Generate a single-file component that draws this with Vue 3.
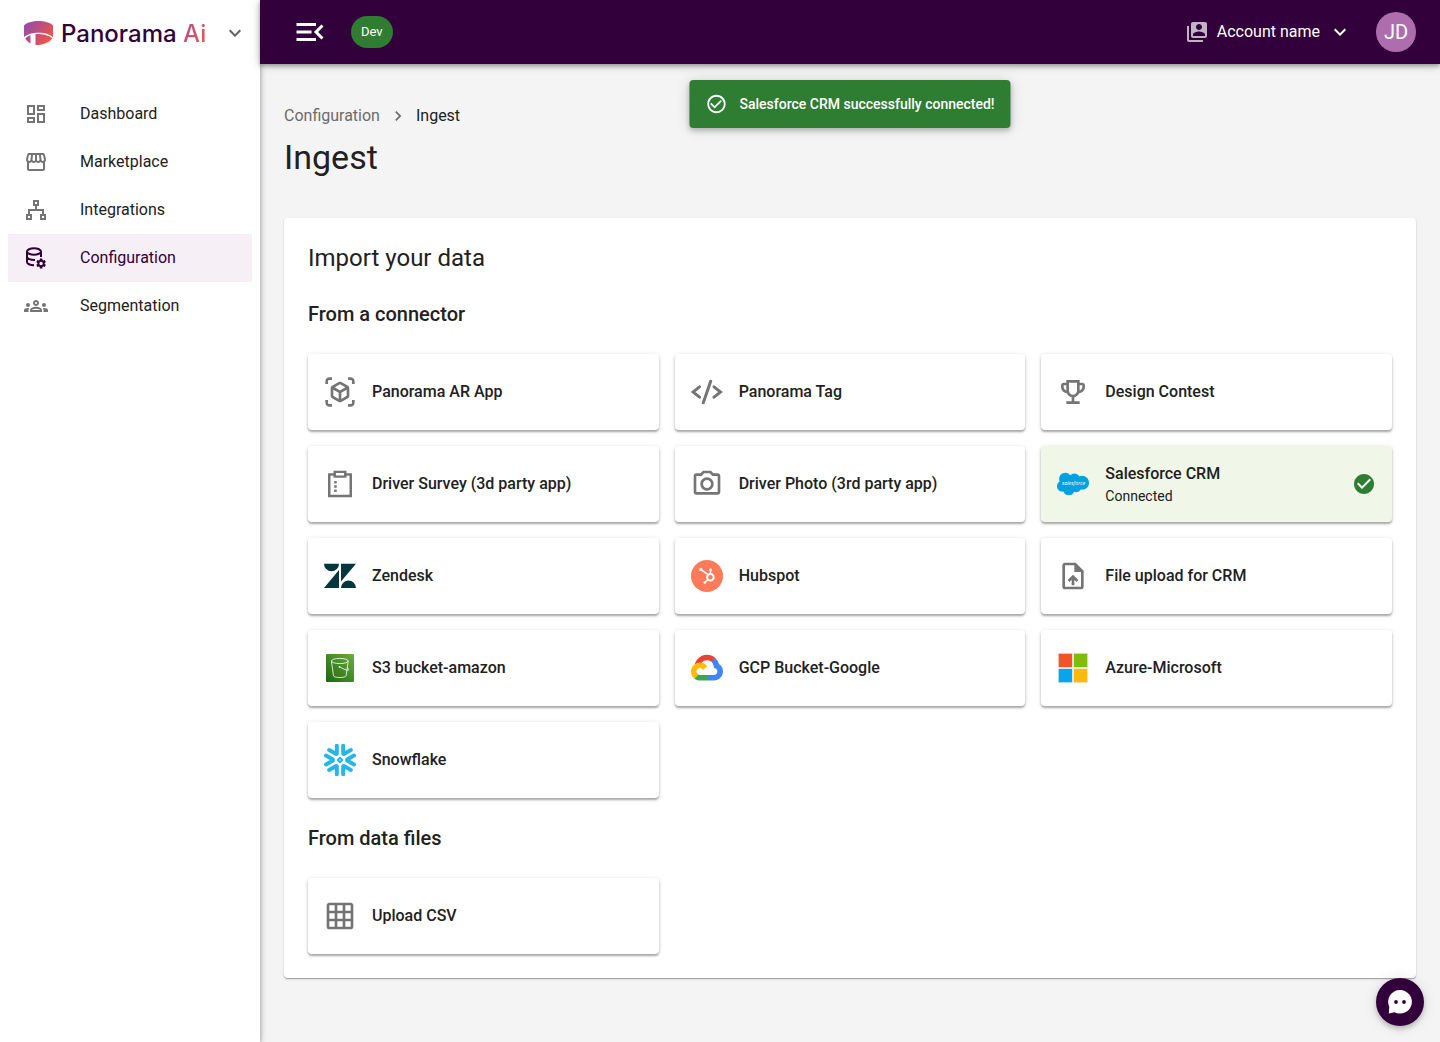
<template>
  <div class="layout">
    <aside class="sidebar">
      <div class="brand">
        <a href="#" class="logo">
          <svg class="logo-mark" viewBox="0 0 29 24" aria-hidden="true">
            <defs>
              <linearGradient id="mark" x1="0" y1="0" x2="1" y2="0.6">
                <stop offset="0" stop-color="#8a50ae" />
                <stop offset="0.5" stop-color="#b94e83" />
                <stop offset="1" stop-color="#ee5843" />
              </linearGradient>
            </defs>
            <path fill="url(#mark)" d="M0 4.500C5-1.500 24-1.500 29 4.500V16.200C22.500 10.400 6.500 10.400 0 16.200ZM11.500 13.200C17 12.600 24 14 28.400 17.200 25.400 21.600 19 24 13 24H11.500ZM1.200 17.200C2.700 15.800 4.500 14.800 6.500 14.200V22.400C4.300 21.300 2.400 19.700 1.200 17.200Z" />
          </svg>
          <span class="wordmark">Panorama <span class="ai">Ai</span></span>
        </a>
        <button class="icon-button" aria-label="Switch product">
          <svg class="icon" viewBox="0 0 24 24"><path :d="chevronDown" /></svg>
        </button>
      </div>

      <nav class="menu">
        <a v-for="item in menu" :key="item.name" href="#" :class="['menu-item', { active: item.active }]">
          <svg v-if="item.path" class="icon" viewBox="0 0 24 24"><path :d="item.path" /></svg>
          <svg v-else-if="item.name === 'Integrations'" class="icon line" viewBox="0 0 24 24">
            <path d="M10 3h4v4h-4zM3 17h4v4H3zM17 17h4v4h-4zM12 8v4M5 16v-4h14v4" />
          </svg>
          <svg v-else class="icon" viewBox="0 0 24 24">
            <g class="line">
              <ellipse cx="10" cy="5.500" rx="7" ry="3.200" />
              <path d="M3 5.500V16c0 1.700 3 3.200 7 3.300M17 5.500V11M3 10.800c0 1.900 3.400 3.300 8 3.200" />
            </g>
            <path transform="translate(11.200 11.600) scale(.49)" :d="cog" />
          </svg>
          <span>{{ item.name }}</span>
        </a>
      </nav>
    </aside>

    <div class="content">
      <header class="topbar">
        <button class="icon-button" aria-label="Collapse menu">
          <svg class="icon-menu" viewBox="0 0 24 24"><path d="M3 18h13v-2H3v2zM3 13h10v-2H3v2zm0-7v2h13V6H3zm18 9.590L17.420 12 21 8.410 19.590 7l-5 5 5 5L21 15.590z" /></svg>
        </button>
        <span class="chip">Dev</span>
        <button class="account">
          <svg class="icon account-icon" viewBox="0 0 24 24"><path d="M4 6H2v14c0 1.100.9 2 2 2h14v-2H4V6zm16-4H8c-1.100 0-2 .9-2 2v12c0 1.100.9 2 2 2h12c1.100 0 2-.9 2-2V4c0-1.100-.9-2-2-2zm-6 2c1.660 0 3 1.340 3 3s-1.340 3-3 3-3-1.340-3-3 1.340-3 3-3zm6 12H8v-1.500c0-1.990 4-3 6-3s6 1.010 6 3V16z" /></svg>
          <span>Account name</span>
          <svg class="icon account-arrow" viewBox="0 0 24 24"><path :d="chevronDown" /></svg>
        </button>
        <button class="avatar">JD</button>
      </header>

      <div class="toast" role="status">
        <svg class="toast-icon" viewBox="0 0 24 24"><path d="M16.590 7.580 10 14.170l-3.590-3.580L5 12l5 5 8-8zM12 2C6.480 2 2 6.480 2 12s4.480 10 10 10 10-4.480 10-10S17.520 2 12 2zm0 18c-4.420 0-8-3.580-8-8s3.580-8 8-8 8 3.580 8 8-3.580 8-8 8z" /></svg>
        <span>Salesforce CRM successfully connected!</span>
      </div>

      <main class="main">
        <nav class="breadcrumbs" aria-label="Breadcrumb">
          <a href="#">Configuration</a>
          <svg class="crumb-arrow" viewBox="0 0 24 24"><path d="M10 6 8.590 7.410 13.170 12l-4.580 4.590L10 18l6-6z" /></svg>
          <span>Ingest</span>
        </nav>
        <h1>Ingest</h1>

        <div class="panel">
          <h2>Import your data</h2>
          <section v-for="section in sections" :key="section.title" class="section">
            <h3>{{ section.title }}</h3>
            <div class="cards">
              <button v-for="card in section.cards" :key="card.name" :class="['card', { connected: card.connected }]">
                <svg v-if="card.path" class="card-icon" viewBox="0 0 24 24"><path :d="card.path" /></svg>

                <svg v-else-if="card.logo === 'tag'" class="card-icon tag" viewBox="0 0 32 32">
                  <path d="M8.500 10.800 2 16 8.500 21.200M23 10.800l6.500 5.200-6.500 5.200M19.700 5.200l-7.400 21.600" />
                </svg>

                <svg v-else-if="card.logo === 'survey'" class="card-icon" viewBox="0 0 32 32">
                  <path fill-rule="evenodd" d="M4 5.200h5.500V2.700h13v2.500H28V29.300H4zM6.500 7.700v19h19v-19h-3v2h-13v-2zM12 5v2.500h8V5z" />
                  <path d="M10.200 13h2.500v2.500h-2.500zM10.200 17.200h2.500v2.500h-2.500zM10.200 21.400h2.500v2.500h-2.500z" />
                </svg>

                <svg v-else-if="card.logo === 'salesforce'" class="card-icon" viewBox="0 0 24 24" aria-hidden="true">
                  <path fill="#00a1e0" d="M10.006 5.415a4.195 4.195 0 013.045-1.306c1.560 0 2.954.9 3.690 2.205.63-.3 1.350-.45 2.100-.45 2.850 0 5.159 2.340 5.159 5.220s-2.310 5.220-5.176 5.220c-.345 0-.69-.044-1.020-.104a3.750 3.750 0 01-3.300 1.950c-.6 0-1.155-.15-1.650-.375A4.314 4.314 0 018.880 20.400a4.302 4.302 0 01-4.050-2.820c-.27.062-.54.076-.825.076-2.204 0-4.005-1.800-4.005-4.050 0-1.500.811-2.805 2.010-3.510-.255-.57-.39-1.200-.39-1.846 0-2.580 2.100-4.650 4.650-4.650 1.530 0 2.850.705 3.720 1.800" />
                  <text class="cloud-text" x="12.500" y="13">salesforce</text>
                </svg>

                <svg v-else-if="card.logo === 'zendesk'" class="card-icon" viewBox="0 0 32 32">
                  <path fill="#03363d" d="M0 3.700h15a7.500 7.500 0 01-15 0zM17 3.700h15L17 21.600zM15 10v18H0zM17 28a7.500 7.500 0 0115 0z" />
                </svg>

                <svg v-else-if="card.logo === 'hubspot'" class="card-icon" viewBox="0 0 32 32">
                  <circle cx="16" cy="16" r="16" fill="#ff7a59" />
                  <g fill="none" stroke="#fff">
                    <circle cx="19.400" cy="17.200" r="3.300" stroke-width="2" />
                    <path stroke-width="1.500" d="M10 9.600l7 5M19.500 10v4M17 19.500l-3 2.900" />
                  </g>
                  <g fill="#fff">
                    <circle cx="9.800" cy="9.400" r="1.600" />
                    <circle cx="19.500" cy="10" r="1.400" />
                    <circle cx="13.800" cy="22.500" r="1.300" />
                  </g>
                </svg>

                <svg v-else-if="card.logo === 's3'" class="card-icon" viewBox="0 0 32 32">
                  <defs>
                    <linearGradient id="bucket" x1="0" y1="1" x2="1" y2="0">
                      <stop offset="0" stop-color="#1b660f" />
                      <stop offset="1" stop-color="#6cae3e" />
                    </linearGradient>
                  </defs>
                  <rect x="2" y="2" width="28" height="28" rx="1" fill="url(#bucket)" />
                  <g fill="none" stroke="#fff" stroke-width="0.800">
                    <ellipse cx="15.800" cy="9" rx="8.400" ry="2.600" />
                    <path d="M7.400 9.200l2.100 14.600c.3 2.300 12.300 2.300 12.600 0L24.200 9.200M15.500 14.800c3 1.700 6.500 3.400 8.600 3.400 1.400 0 .3-1.600-.9-2.600" />
                  </g>
                  <circle cx="15.500" cy="14.800" r="0.900" fill="#fff" />
                </svg>

                <svg v-else-if="card.logo === 'gcp'" class="card-icon" viewBox="0 -22 256 256">
                  <path fill="#ea4335" d="M170.252 56.819l22.253-22.253 1.483-9.370C153.437-11.677 88.976-7.496 52.420 33.920 42.267 45.423 34.734 59.764 30.717 74.573l7.970-1.123 44.505-7.340 3.436-3.513c19.797-21.742 53.270-24.667 76.128-6.168l7.496.39z" />
                  <path fill="#4285f4" d="M224.205 73.918a100.249 100.249 0 00-30.217-48.722l-31.232 31.232a55.515 55.515 0 0120.379 44.037v5.544c15.350 0 27.797 12.445 27.797 27.796 0 15.352-12.446 27.485-27.797 27.485h-55.671l-5.466 5.934v33.340l5.466 5.231h55.670c39.930.311 72.553-31.494 72.864-71.424a72.303 72.303 0 00-31.793-60.453" />
                  <path fill="#34a853" d="M71.870 205.796h55.593V161.290H71.870a27.275 27.275 0 01-11.470-2.498l-7.887 2.420-22.409 22.253-1.952 7.574c12.567 9.489 27.900 14.825 43.718 14.757" />
                  <path fill="#fbbc05" d="M71.870 61.425C31.940 61.663-.237 94.228.001 134.158a72.301 72.301 0 0028.222 56.880l32.248-32.246c-13.990-6.322-20.208-22.786-13.887-36.776 6.320-13.990 22.786-20.208 36.775-13.888a27.796 27.796 0 0113.887 13.888l32.248-32.248A72.224 72.224 0 0071.870 61.425" />
                </svg>

                <svg v-else-if="card.logo === 'azure'" class="card-icon" viewBox="0 0 32 32">
                  <path fill="#f0efeb" d="M1 1h30v30H1z" />
                  <path fill="#f35325" d="M1.700 1.700h13.400v13.400H1.700z" />
                  <path fill="#81bc06" d="M16.900 1.700h13.400v13.400H16.900z" />
                  <path fill="#05a6f0" d="M1.700 16.900h13.400v13.400H1.700z" />
                  <path fill="#ffba08" d="M16.900 16.900h13.400v13.400H16.900z" />
                </svg>

                <svg v-else-if="card.logo === 'snowflake'" class="card-icon snowflake" viewBox="0 0 32 32">
                  <path v-for="n in 6" :key="n" :transform="`rotate(${n * 60} 16 16)`" d="M2 11.600 8.900 15.600V16.400L2 20.400" />
                  <path class="core" d="M16 13.700 18.300 16 16 18.300 13.700 16z" />
                </svg>

                <span class="card-text">
                  <span class="card-name">{{ card.name }}</span>
                  <span v-if="card.connected" class="card-status">Connected</span>
                </span>
                <svg v-if="card.connected" class="icon check" viewBox="0 0 24 24"><path d="M12 2C6.480 2 2 6.480 2 12s4.480 10 10 10 10-4.480 10-10S17.520 2 12 2z" /><path fill="#fff" d="M10 17l-5-5 1.410-1.410L10 14.170l7.590-7.590L19 8l-9 9z" /></svg>
              </button>
            </div>
          </section>
        </div>
      </main>
    </div>

    <button class="chat" aria-label="Open chat">
      <svg class="chat-icon" viewBox="0 0 24 24">
        <path fill="#fff" d="M12 0a11.800 11.800 0 1 1-5.500 22.200L.8 23.500 1.300 17A11.800 11.800 0 0 1 12 0z" />
        <circle cx="8" cy="12" r="1.900" />
        <circle cx="16" cy="12" r="1.900" />
      </svg>
    </button>
  </div>
</template>

<script setup>
const chevronDown = 'M7.410 8.590 12 13.170l4.590-4.580L18 10l-6 6-6-6z'

const cog = 'M12 15.500A3.500 3.500 0 018.500 12 3.500 3.500 0 0112 8.500a3.500 3.500 0 013.500 3.500 3.500 3.500 0 01-3.500 3.500m7.430-2.530c.04-.32.07-.64.07-.97s-.03-.66-.07-1l2.110-1.630c.19-.15.24-.42.12-.64l-2-3.460c-.12-.22-.39-.31-.61-.22l-2.490 1c-.52-.39-1.060-.73-1.690-.98l-.37-2.650A.506.506 0 0014 2h-4c-.25 0-.46.18-.5.42l-.37 2.650c-.63.25-1.170.59-1.690.98l-2.490-1c-.22-.09-.49 0-.61.22l-2 3.460c-.13.22-.07.49.12.64L4.570 11c-.04.34-.07.67-.07 1s.03.65.07.97l-2.110 1.660c-.19.15-.25.42-.12.64l2 3.460c.12.22.39.3.61.22l2.490-1.010c.52.4 1.060.74 1.690.99l.37 2.650c.04.24.25.42.5.42h4c.25 0 .46-.18.5-.42l.37-2.650c.63-.26 1.170-.59 1.690-.99l2.490 1.010c.22.08.49 0 .61-.22l2-3.460c.12-.22.07-.49-.12-.64l-2.110-1.660z'

const menu = [
  {
    name: 'Dashboard',
    path: 'M19 5v2h-4V5h4M9 5v6H5V5h4m10 8v6h-4v-6h4M9 17v2H5v-2h4M21 3h-8v6h8V3zM11 3H3v10h8V3zm10 8h-8v10h8V11zm-10 4H3v6h8v-6z'
  },
  {
    name: 'Marketplace',
    path: 'M21.900 8.890l-1.050-4.370c-.22-.9-1-1.520-1.910-1.520H5.050c-.9 0-1.690.63-1.900 1.520L2.100 8.890c-.24 1.020-.02 2.060.62 2.880.08.11.19.19.28.29V19c0 1.100.9 2 2 2h14c1.100 0 2-.9 2-2v-6.940c.09-.09.2-.18.28-.28.64-.82.87-1.870.62-2.890zm-2.990-3.900l1.050 4.370c.1.42.01.84-.25 1.170-.14.18-.44.47-.94.47-.61 0-1.140-.49-1.210-1.140L16.980 5l1.930-.01zM13 5h1.960l.54 4.520c.05.39-.07.78-.33 1.070-.22.26-.54.41-.95.41-.67 0-1.220-.59-1.220-1.310V5zM8.490 9.520L9.040 5H11v4.690c0 .72-.55 1.310-1.290 1.310-.34 0-.65-.15-.89-.41-.25-.29-.37-.68-.33-1.070zm-4.450-.16L5.050 5h1.970l-.58 4.860c-.08.65-.6 1.140-1.210 1.140-.49 0-.8-.29-.93-.47-.27-.32-.36-.75-.26-1.170zM5 19v-6.030c.08.01.15.03.23.03.87 0 1.660-.36 2.240-.95.6.6 1.400.95 2.310.95.87 0 1.650-.36 2.230-.93.59.57 1.390.93 2.290.93.84 0 1.640-.35 2.240-.95.58.59 1.370.95 2.240.95.08 0 .15-.02.23-.03V19H5z'
  },
  { name: 'Integrations' },
  { name: 'Configuration', active: true },
  {
    name: 'Segmentation',
    path: 'M4 13c1.100 0 2-.9 2-2s-.9-2-2-2-2 .9-2 2 .9 2 2 2zm1.130 1.100C4.760 14.040 4.390 14 4 14c-.99 0-1.930.21-2.780.58C.48 14.900 0 15.620 0 16.430V18h4.500v-1.610c0-.83.23-1.610.63-2.290zM20 13c1.100 0 2-.9 2-2s-.9-2-2-2-2 .9-2 2 .9 2 2 2zm4 3.430c0-.81-.48-1.530-1.220-1.850-.85-.37-1.790-.58-2.780-.58-.39 0-.76.04-1.130.1.4.68.63 1.460.63 2.290V18H24v-1.570zM16.240 13.650c-1.170-.52-2.610-.9-4.240-.9-1.630 0-3.070.39-4.240.9C6.680 14.130 6 15.210 6 16.390V18h12v-1.610c0-1.180-.68-2.260-1.760-2.740zM8.070 16c.09-.23.13-.39.91-.69.97-.38 1.990-.56 3.020-.56s2.050.18 3.020.56c.77.3.81.46.91.69H8.070zM12 8c.55 0 1 .45 1 1s-.45 1-1 1-1-.45-1-1 .45-1 1-1m0-2c-1.660 0-3 1.340-3 3s1.340 3 3 3 3-1.340 3-3-1.340-3-3-3z'
  }
]

const sections = [
  {
    title: 'From a connector',
    cards: [
      {
        name: 'Panorama AR App',
        path: 'M3 4c0-.55.45-1 1-1h2V1H4C2.340 1 1 2.340 1 4v2h2V4zM3 20v-2H1v2c0 1.660 1.340 3 3 3h2v-2H4c-.55 0-1-.45-1-1zM20 1h-2v2h2c.55 0 1 .45 1 1v2h2V4c0-1.660-1.340-3-3-3zM21 20c0 .55-.45 1-1 1h-2v2h2c1.660 0 3-1.340 3-3v-2h-2v2zM19 14.870V9.130c0-.72-.38-1.380-1-1.730l-5-2.880c-.31-.18-.65-.27-1-.27s-.69.09-1 .27L6 7.390c-.62.36-1 1.020-1 1.740v5.740c0 .72.38 1.380 1 1.730l5 2.880c.31.18.65.27 1 .27s.69-.09 1-.27l5-2.880c.62-.35 1-1.010 1-1.730zm-8 2.300-4-2.300v-4.630l4 2.330v4.600zm1-6.330L8.040 8.530 12 6.250l3.960 2.280L12 10.840zm5 4.030-4 2.300v-4.600l4-2.330v4.630z'
      },
      { name: 'Panorama Tag', logo: 'tag' },
      {
        name: 'Design Contest',
        path: 'M19 5h-2V3H7v2H5c-1.100 0-2 .9-2 2v1c0 2.550 1.920 4.630 4.390 4.940.63 1.500 1.980 2.630 3.610 2.960V19H7v2h10v-2h-4v-3.100c1.630-.33 2.980-1.460 3.610-2.960C19.080 12.630 21 10.550 21 8V7c0-1.100-.9-2-2-2zM5 8V7h2v3.820C5.840 10.400 5 9.300 5 8zm7 6c-1.650 0-3-1.350-3-3V5h6v6c0 1.650-1.350 3-3 3zm7-6c0 1.300-.84 2.400-2 2.820V7h2v1z'
      },
      { name: 'Driver Survey (3d party app)', logo: 'survey' },
      {
        name: 'Driver Photo (3rd party app)',
        path: 'M14.120 4l1.830 2H20v12H4V6h4.050l1.830-2h4.240M15 2H9L7.170 4H4c-1.100 0-2 .9-2 2v12c0 1.100.9 2 2 2h16c1.100 0 2-.9 2-2V6c0-1.100-.9-2-2-2h-3.170L15 2zm-3 7c1.650 0 3 1.350 3 3s-1.350 3-3 3-3-1.350-3-3 1.350-3 3-3m0-2c-2.760 0-5 2.240-5 5s2.240 5 5 5 5-2.240 5-5-2.240-5-5-5z'
      },
      { name: 'Salesforce CRM', logo: 'salesforce', connected: true },
      { name: 'Zendesk', logo: 'zendesk' },
      { name: 'Hubspot', logo: 'hubspot' },
      {
        name: 'File upload for CRM',
        path: 'M14 2H6c-1.100 0-1.990.9-1.990 2L4 20c0 1.100.89 2 1.990 2H18c1.100 0 2-.9 2-2V8l-6-6zm4 18H6V4h7v5h5v11zM8 15.010l1.410 1.410L11 14.840V19h2v-4.160l1.590 1.590L16 15.010 12.010 11 8 15.010z'
      },
      { name: 'S3 bucket-amazon', logo: 's3' },
      { name: 'GCP Bucket-Google', logo: 'gcp' },
      { name: 'Azure-Microsoft', logo: 'azure' },
      { name: 'Snowflake', logo: 'snowflake' }
    ]
  },
  {
    title: 'From data files',
    cards: [
      {
        name: 'Upload CSV',
        path: 'M20 2H4c-1.100 0-2 .9-2 2v16c0 1.100.9 2 2 2h16c1.100 0 2-.9 2-2V4c0-1.100-.9-2-2-2zM8 20H4v-4h4v4zm0-6H4v-4h4v4zm0-6H4V4h4v4zm6 12h-4v-4h4v4zm0-6h-4v-4h4v4zm0-6h-4V4h4v4zm6 12h-4v-4h4v4zm0-6h-4v-4h4v4zm0-6h-4V4h4v4z'
      }
    ]
  }
]
</script>

<style>
body {
  margin: 0;
  background: #f4f4f4;
}
</style>

<style scoped>
.layout {
  display: flex;
  min-height: 100vh;
  font-family: Roboto, "Liberation Sans", sans-serif;
  font-size: 16px;
  line-height: 24px;
  color: #212121;
}

button {
  padding: 0;
  border: none;
  background: none;
  font: inherit;
  color: inherit;
  text-align: left;
  cursor: pointer;
}

a {
  color: inherit;
  text-decoration: none;
}

svg {
  display: block;
  flex: none;
  fill: currentColor;
}

.icon {
  width: 24px;
  height: 24px;
}

.line {
  fill: none;
  stroke: currentColor;
  stroke-width: 2;
}

.icon-button {
  display: flex;
}

/* sidebar */
.sidebar {
  flex: none;
  width: 260px;
  background: #fff;
  box-shadow: 0 2px 4px rgba(0, 0, 0, 0.3), 0 1px 8px rgba(0, 0, 0, 0.2);
  z-index: 1;
}

.brand {
  display: flex;
  align-items: center;
  justify-content: space-between;
  height: 66px;
  padding: 0 13px 0 24px;
  color: #616161;
}

.logo {
  display: flex;
  align-items: center;
  gap: 8px;
}

.logo-mark {
  width: 29px;
  height: 24px;
}

.wordmark {
  padding-top: 2px;
  font-family: Inter, sans-serif;
  font-size: 24px;
  font-weight: 500;
  line-height: 32px;
  color: #32003b;
}

.ai {
  color: transparent;
  background: linear-gradient(120deg, #a8508f, #f0584a);
  background-clip: text;
}

.menu {
  padding: 24px 8px;
}

.menu-item {
  display: flex;
  align-items: center;
  gap: 32px;
  height: 48px;
  padding: 0 16px;
}

.menu-item .icon {
  color: #757575;
}

.menu-item.active,
.menu-item.active .icon {
  color: #32003b;
}

.menu-item.active {
  background: #f6eff6;
}

/* top bar */
.content {
  position: relative;
  flex: 1;
  min-width: 0;
}

.topbar {
  position: relative;
  z-index: 2;
  display: flex;
  align-items: center;
  height: 64px;
  padding: 0 24px 0 32px;
  background: #32003b;
  color: #fff;
  box-shadow: 0 2px 4px rgba(0, 0, 0, 0.3), 0 1px 10px rgba(0, 0, 0, 0.2);
}

.icon-menu {
  width: 36px;
  height: 36px;
}

.chip {
  margin-left: 23px;
  padding: 4px 10px;
  border-radius: 16px;
  background: #2e7d32;
  font-size: 13px;
}

.account {
  display: flex;
  align-items: center;
  gap: 8px;
  margin-left: auto;
}

.account-icon {
  opacity: 0.7;
}

.avatar {
  width: 40px;
  height: 40px;
  margin-left: 24px;
  border-radius: 50%;
  background: #ae6eae;
  font-size: 20px;
  text-align: center;
}

.toast {
  position: absolute;
  top: 80px;
  left: 50%;
  transform: translateX(-50%);
  z-index: 3;
  display: flex;
  align-items: center;
  gap: 12px;
  height: 48px;
  padding: 0 16px;
  border-radius: 4px;
  background: #2e7d32;
  color: #fff;
  font-size: 14px;
  font-weight: 500;
  white-space: nowrap;
  box-shadow: 0 3px 5px rgba(0, 0, 0, 0.2), 0 1px 14px rgba(0, 0, 0, 0.14);
}

.toast-icon {
  width: 22px;
  height: 22px;
}

/* page */
.main {
  padding: 40px 24px 64px;
}

.breadcrumbs {
  display: flex;
  align-items: center;
  gap: 8px;
}

.breadcrumbs a {
  color: #6b6b6b;
}

.crumb-arrow {
  width: 20px;
  height: 20px;
  color: #6b6b6b;
}

h1 {
  margin: 8px 0 40px;
  font-size: 34px;
  line-height: 42px;
  font-weight: 400;
}

.panel {
  display: flex;
  flex-direction: column;
  gap: 24px;
  padding: 24px;
  border-radius: 4px;
  background: #fff;
  box-shadow: 0 1px 1px rgba(0, 0, 0, 0.3), 0 1px 3px rgba(0, 0, 0, 0.1);
}

h2,
h3 {
  margin: 0;
  line-height: 32px;
}

h2 {
  font-size: 24px;
  font-weight: 400;
}

h3 {
  font-size: 20px;
  font-weight: 500;
}

.section {
  display: flex;
  flex-direction: column;
  gap: 24px;
}

.cards {
  display: grid;
  grid-template-columns: repeat(3, 1fr);
  gap: 16px;
}

.card {
  display: flex;
  align-items: center;
  gap: 16px;
  min-height: 76px;
  padding: 8px 16px;
  border-radius: 4px;
  background: #fff;
  box-shadow: 0 2px 2px rgba(0, 0, 0, 0.28), 0 1px 5px rgba(0, 0, 0, 0.14);
}

.card.connected {
  background: #f0f6e8;
}

.card-icon {
  width: 32px;
  height: 32px;
  color: #757575;
}

.card-text {
  flex: 1;
}

.card-name,
.card-status {
  display: block;
}

.card-name {
  font-weight: 500;
}

.card-status {
  font-size: 14px;
  line-height: 20px;
}

.check {
  color: #2e7d32;
}

.tag {
  fill: none;
  stroke: currentColor;
  stroke-width: 3;
}

.tag path {
  stroke-linecap: round;
}

.cloud-text {
  font: italic 4px "Open Sans", sans-serif;
  text-anchor: middle;
  fill: #fff;
}

.snowflake {
  fill: none;
  stroke: #29b5e8;
  stroke-width: 4;
  stroke-linecap: round;
  stroke-linejoin: round;
}

.snowflake .core {
  stroke-width: 2;
}

.chat {
  position: fixed;
  right: 16px;
  bottom: 16px;
  z-index: 4;
  display: flex;
  align-items: center;
  justify-content: center;
  width: 48px;
  height: 48px;
  border-radius: 50%;
  background: #32003b;
  color: #32003b;
  box-shadow: 0 3px 5px rgba(0, 0, 0, 0.2), 0 1px 14px rgba(0, 0, 0, 0.12);
}

.chat-icon {
  width: 24px;
  height: 24px;
}
</style>
